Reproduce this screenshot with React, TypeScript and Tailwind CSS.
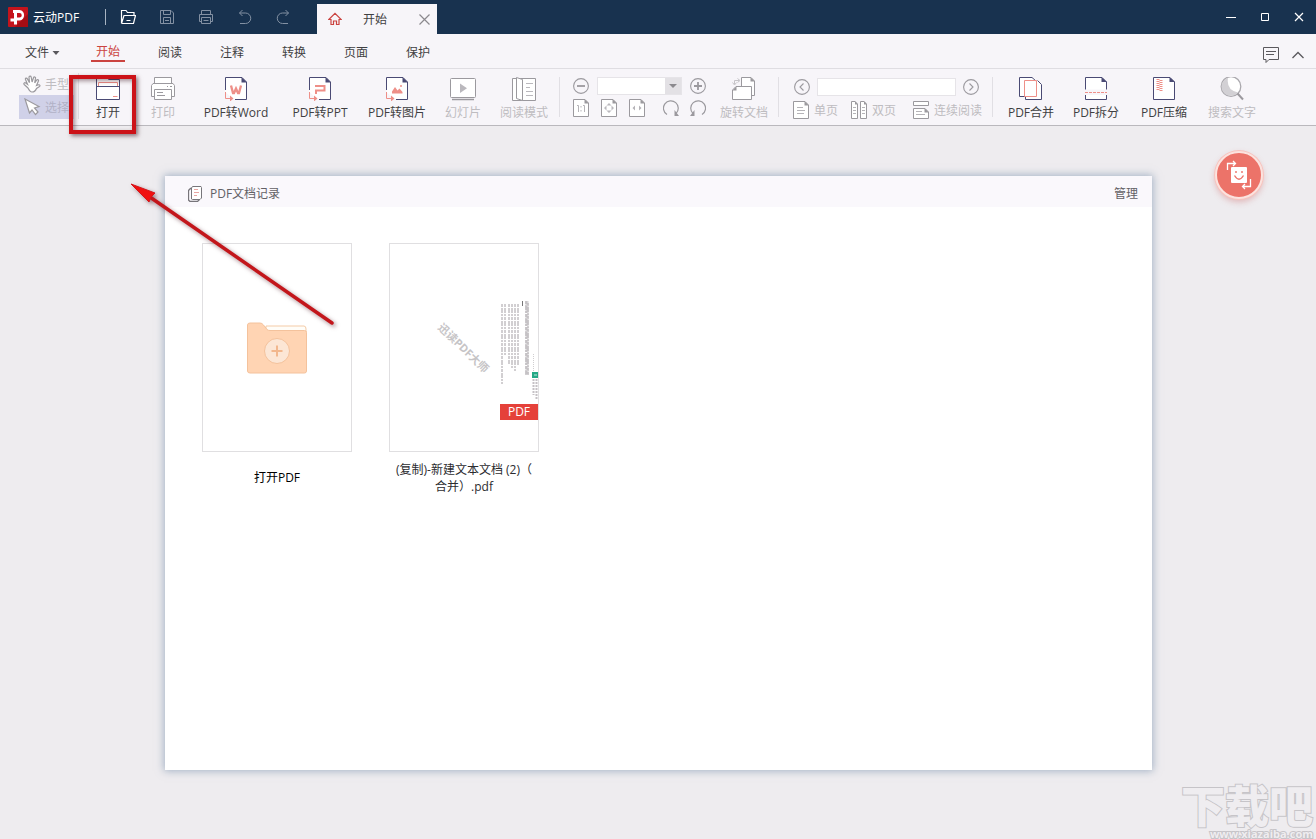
import React from "react";

type IconProps = { children: React.ReactNode; size?: string; box?: string; className?: string };

function Svg({ children, size = "h-6 w-6", box = "0 0 24 24", className = "" }: IconProps) {
  return (
    <svg aria-hidden="true" viewBox={box} fill="none" stroke="currentColor" className={`shrink-0 ${size} ${className}`}>
      {children}
    </svg>
  );
}

const NAVY = "#4a4a74";
const CORAL = "#ee8f88";

/* ---------- toolbar icons ---------- */

function ConvertIcon({ children }: { children: React.ReactNode }) {
  return (
    <Svg>
      <path d="M1.5 14V.5H18L22.5 5V22.5H9.5L1.5 15Z" fill="#fff" stroke="none" />
      <path d="M1.5 13V.5H18L22.5 5V22.5H11" stroke={NAVY} />
      <path d="M17.5 0V5.5H23Z" fill={NAVY} stroke="none" />
      <path d="M1.5 15V21.5H8" stroke={CORAL} />
      <path d="M6 18.5L9.5 21.5L6 24.5Z" fill={CORAL} stroke="none" />
      {children}
    </Svg>
  );
}

const OpenIcon = () => (
  <Svg>
    <path d="M.5 22.5V.5H10L13 2.5H23.5V22.5Z" fill="#fff" stroke={NAVY} />
    <path d="M2.5 9V5.5H21.5V9" stroke={CORAL} />
    <path d="M.5 9.5H23.5" stroke={NAVY} />
    <path d="M17 19.5H21.5" stroke={CORAL} />
  </Svg>
);

const PrintIcon = () => (
  <Svg>
    <path d="M3.5 7V.5H20.5V7" fill="#fff" />
    <path d="M3.5 19.5H.5V8.500L2 6.5H22L23.5 8.500V19.5H20.5" fill="#fff" />
    <path d="M3.5 12.5H20.5V22.5H3.5Z" fill="#fff" />
    <path d="M6 15.5H12M6 18.5H14M16 9.5H17M19 9.5H21" />
  </Svg>
);

const WordIcon = () => (
  <ConvertIcon>
    <path d="M7 8.500L9 16H10L12 11.5L14 16H15L17 8.500" stroke={CORAL} strokeWidth="2.3" />
  </ConvertIcon>
);
const PptIcon = () => (
  <ConvertIcon>
    <path d="M8 17V13.5H16.5V9H7" stroke={CORAL} strokeWidth="2" />
  </ConvertIcon>
);
const PictureIcon = () => (
  <ConvertIcon>
    <path d="M7 16.5V14.5L10 10L12.5 13.5L14.5 11.5L17.5 15V16.5Z" fill={CORAL} stroke="none" />
    <circle cx="16" cy="9" r="1" fill={CORAL} stroke="none" />
  </ConvertIcon>
);

const SlideIcon = () => (
  <Svg size="h-6 w-[26px]" box="0 0 26 24">
    <rect x=".5" y="1.5" width="25" height="19" rx="1" fill="#fff" />
    <path d="M10 6.5V16L17 11.2Z" fill="#bab8bd" stroke="none" />
    <path d="M2 22.5H24" strokeWidth="1.5" />
  </Svg>
);

const ReadIcon = () => (
  <Svg>
    <path d="M.5 1.5H23.5V23.5H.5Z" fill="#fff" />
    <path d="M4.5 .5L10.5 2.5V23.5L4.5 21.5Z" fill="#fff" />
    <path d="M14 6.5H21M14 10.5H18M14 14.5H21M14 18.5H21" stroke="#bab8bd" />
  </Svg>
);

const RotateDocIcon = () => (
  <Svg>
    <path d="M9.5 10V.5H19L22.5 4V18.5H19" fill="#fff" />
    <path d="M18.5 0V4.5H23Z" fill="currentColor" stroke="none" />
    <path d="M.5 22.5V13L4 9.5H19.5V22.5Z" fill="#fff" />
    <path d="M.5 13.5L4.5 9V13.5Z" fill="currentColor" stroke="none" />
    <path d="M2.5 7V3.5H7M.5 5.5L2.5 8L4.5 5.5M5.5 1.5L8 3.5L5.5 5.5" stroke="#c6c4c8" />
  </Svg>
);

const MergeIcon = () => (
  <Svg>
    <path d="M.5 19.5V.5H13L22.5 7V22.5H6.5V19.5Z" fill="#fff" stroke="none" />
    <path d="M6 19.5H.5V.5H13L17 4" stroke={NAVY} />
    <path d="M6.5 20V22.5H22.5V7.5L18.5 3.5" stroke={NAVY} />
    <path d="M5.500 3.5H17.5V19.5H5.500Z" stroke={CORAL} />
  </Svg>
);

const SplitIcon = () => (
  <Svg>
    <path d="M1.5 12.5V.5H18L22.5 5V12.5M1.5 18V22.5H22.5V18" fill="#fff" stroke={NAVY} />
    <path d="M17.5 0V5H23Z" fill={NAVY} stroke="none" />
    <path d="M1 15.5H23" stroke={CORAL} strokeDasharray="3 1" />
  </Svg>
);

const CompressIcon = () => (
  <Svg>
    <path d="M1.5 .5H18L22.5 5V22.5H1.5Z" fill="#fff" stroke={NAVY} />
    <path d="M17.5 0V5H23Z" fill={NAVY} stroke="none" />
    <path d="M6 2V14" stroke={CORAL} strokeWidth="3" strokeDasharray="1 1" />
    <path d="M9 3V14" stroke={CORAL} strokeWidth="3" strokeDasharray="1 1" />
  </Svg>
);

const SearchIcon = () => (
  <Svg>
    <circle cx="11" cy="9.5" r="9.8" fill="#fff" stroke="#aaa8ad" strokeWidth="1.3" />
    <path d="M8 .7A9.3 9.3 0 1 0 18 15.5Q6 13 8 .7Z" fill="#d2d0d4" stroke="none" />
    <path d="M17.500 16.500L23 22.5" strokeWidth="2" />
  </Svg>
);

/* ---------- small icons ---------- */

const Sm = ({ children }: { children: React.ReactNode }) => (
  <Svg size="h-[18px] w-4" box="0 0 16 18">
    {children}
  </Svg>
);

const SmallPage = ({ children }: { children: React.ReactNode }) => (
  <Sm>
    <path d="M.5 .5H12L15.5 4V17.5H.5Z" fill="#fff" />
    <path d="M11.5 0V4.5H16Z" fill="currentColor" stroke="none" />
    {children}
  </Sm>
);

const Round = ({ d, bold = false }: { d: string; bold?: boolean }) => (
  <Svg size="h-4 w-4" box="0 0 16 16">
    <circle cx="8" cy="8" r="7.4" strokeWidth="1.1" />
    <path d={d} strokeWidth={bold ? 1.8 : 1.1} />
  </Svg>
);

const HandIcon = () => (
  <Svg size="h-[18px] w-[18px]" box="0 0 18 18">
    <path
      d="M5 13L1.2 9.5C.3 8.600 1.5 7.2 2.7 8L4.5 9.3L2.5 4.5C2 3.1 3.8 2.6 4.4 3.9L6.5 7.6L6 2.3C6 .8 7.9.7 8.2 2.1L9.1 7L10.5 2.7C11 1.4 12.8 1.9 12.5 3.2L11.7 7.8L13.6 5.2C14.5 4 16 5 15.3 6.2L13.5 10.5L15.5 9.8C17 9.5 17.5 11 16.2 11.8L13.5 13.5C12.5 16 11 17 9 17C7 17 6 15 5 13Z"
      fill="#fff"
      strokeWidth="1.2"
    />
  </Svg>
);

const CursorIcon = () => (
  <Svg size="h-[18px] w-[18px]" box="0 0 18 18">
    <path d="M2 1L16 8.500L11.5 10L15 14L12.5 16.5L9 12L6.5 15Z" fill="#fff" strokeWidth="1.2" />
  </Svg>
);

/* ---------- building blocks ---------- */

function Tool({ icon, label, width, disabled = false }: { icon: React.ReactNode; label: string; width: string; disabled?: boolean }) {
  return (
    <button
      type="button"
      disabled={disabled}
      className={`flex shrink-0 flex-col items-center gap-1 whitespace-nowrap leading-4 ${width} ${disabled ? "text-[#9b999e]" : "text-[#3f3f42]"}`}
    >
      {icon}
      <span className={disabled ? "text-[#bebcc0]" : ""}>{label}</span>
    </button>
  );
}

function IconButton({ label, children }: { label: string; children: React.ReactNode }) {
  return (
    <button type="button" aria-label={label} disabled className="flex shrink-0 text-[#9b999e]">
      {children}
    </button>
  );
}

function PageMode({ icon, label }: { icon: React.ReactNode; label: string }) {
  return (
    <button type="button" disabled className="flex items-center gap-[5px] whitespace-nowrap leading-4 text-[#9b999e]">
      {icon}
      <span className="pt-[2px] text-[#bebcc0]">{label}</span>
    </button>
  );
}

const Divider = () => <div className="h-10 w-px shrink-0 bg-[#e1dfe4]" />;

function TitleBar() {
  return (
    <header className="flex h-[34px] items-stretch bg-[#18324f] text-white">
      <div className="flex w-[105px] items-center gap-[5px] pl-2">
        <svg viewBox="0 0 20 20" aria-hidden="true" className="h-5 w-5">
          <rect width="20" height="20" rx="1" fill="#c4141c" />
          <path d="M20 7V20H7Z" fill="#a60d14" />
          <path
            fillRule="evenodd"
            d="M5 3H11.5A5.3 5.3 0 0 1 11.5 13.5H9V17.5H6V14.5H2.5V11.5H6V6H5ZM9 6V10.5H11.5A2.2 2.2 0 0 0 11.5 6Z"
            fill="#fff"
          />
        </svg>
        <span className="whitespace-nowrap pt-[2px] leading-4">云动PDF</span>
      </div>
      <div className="my-auto h-4 w-px bg-[#a8b4c2]" />
      <div className="flex w-[211px] items-center gap-[23px] pl-[14px] text-[#8391a3]">
        <button type="button" aria-label="打开" className="text-white">
          <Svg size="h-4 w-4" box="0 0 16 16">
            <path d="M1.5 14.5V1.5H6L7.5 3.5H14V6M1.5 14.5H13.5L15.5 6.5H4L1.5 14.5M6.5 11.5H10.5" strokeWidth="1.2" />
          </Svg>
        </button>
        <button type="button" aria-label="保存">
          <Svg size="h-4 w-4" box="0 0 16 16">
            <path d="M1.5 1.5H12L14.5 4V14.5H1.5ZM4.5 1.5V5.5H11.5V1.5M4.5 14.5V8.500H11.5V14.5M6 11.5H10" />
          </Svg>
        </button>
        <button type="button" aria-label="打印">
          <Svg size="h-4 w-4" box="0 0 16 16">
            <path d="M3.5 5V1.5H12.5V5M3.5 12.5H1.5V5.5H14.5V12.5H12.5M3.5 8.500H12.5V14.5H3.5ZM5.5 11.5H10.5" />
          </Svg>
        </button>
        <button type="button" aria-label="撤销">
          <Svg size="h-4 w-4" box="0 0 16 16">
            <path d="M5.5 1L2.5 4L5.5 7M2.5 4H8.500A5 5 0 0 1 8.500 14.5H3" />
          </Svg>
        </button>
        <button type="button" aria-label="重做">
          <Svg size="h-4 w-4" box="0 0 16 16">
            <path d="M9.5 1L12.5 4L9.5 7M12.5 4H6.5A5 5 0 0 0 6.5 14.5H12" />
          </Svg>
        </button>
      </div>
      <div className="mt-1 flex w-[120px] items-center bg-[#f7f5f9] pl-[11px] pr-[7px] text-[#3f3f42]">
        <Svg size="h-[14px] w-[14px]" box="0 0 14 14" className="text-[#cb4340]">
          <path d="M.8 7.5L7 1.3L13.2 7.5H11V12.5H8.500V9H5.5V12.5H3V7.5Z" strokeWidth="1.2" />
        </Svg>
        <a href="#start" className="ml-[21px] pt-[2px] leading-4">
          开始
        </a>
        <button type="button" aria-label="关闭标签" className="ml-auto text-[#8b898e]">
          <Svg size="h-[11px] w-[11px]" box="0 0 11 11">
            <path d="M.5 .5L10.5 10.5M10.5 .5L.5 10.5" strokeWidth="1.2" />
          </Svg>
        </button>
      </div>
      <div className="ml-auto flex items-center gap-6 pr-3">
        <button type="button" aria-label="最小化">
          <Svg size="h-[10px] w-[10px]" box="0 0 10 10">
            <path d="M0 5.5H10" />
          </Svg>
        </button>
        <button type="button" aria-label="最大化">
          <Svg size="h-[10px] w-[10px]" box="0 0 10 10">
            <path d="M1.5 1.5H8.500V8.500H1.5Z" />
          </Svg>
        </button>
        <button type="button" aria-label="关闭">
          <Svg size="h-[10px] w-[10px]" box="0 0 10 10">
            <path d="M1 1L9 9M9 1L1 9" strokeWidth="1.2" />
          </Svg>
        </button>
      </div>
    </header>
  );
}

const MENUS = ["开始", "阅读", "注释", "转换", "页面", "保护"];

function MenuBar() {
  return (
    <nav className="flex h-[35px] items-center border-b border-[#dfdde2] bg-[#f7f5f9] pl-[25px] pr-3 pt-1 text-[#3f3f42]">
      <button type="button" className="flex w-[52px] items-center gap-[3px] leading-4">
        文件
        <Svg size="h-1 w-2" box="0 0 8 4">
          <path d="M.5 0H7.5L4 4Z" fill="#5a585d" stroke="none" />
        </Svg>
      </button>
      {MENUS.map((name, i) => (
        <a key={name} href={`#menu-${i}`} className="flex w-[62px] justify-center leading-4">
          <span className={i === 0 ? "border-b-2 border-[#cb4340] px-[5px] text-[#cb4340]" : ""}>{name}</span>
        </a>
      ))}
      <div className="ml-auto flex items-center gap-[13px] pt-[3px] text-[#5a585d]">
        <button type="button" aria-label="反馈">
          <Svg size="h-4 w-4" box="0 0 16 16">
            <path d="M.5 .5H15.5V12.5H6L3 15.5V12.5H.5ZM3 4.5H13M3 7.5H11" />
          </Svg>
        </button>
        <button type="button" aria-label="收起工具栏">
          <Svg size="h-3 w-3" box="0 0 12 12">
            <path d="M.5 9L6 3.5L11.5 9" strokeWidth="1.3" />
          </Svg>
        </button>
      </div>
    </nav>
  );
}

function ToolBar() {
  return (
    <div className="flex h-[57px] items-start border-b border-[#bab8bd] bg-[#f7f5f9] pl-[19px] pt-2">
      <div className="-mt-1 flex w-[60px] shrink-0 flex-col border-r border-[#e1dfe4] text-[#9b999e]">
        <button type="button" disabled className="flex h-[22px] items-center gap-1 pl-1 leading-4">
          <HandIcon />
          <span className="pt-[2px] text-[#bebcc0]">手型</span>
        </button>
        <button type="button" disabled className="mr-1 flex h-6 items-center gap-1 bg-[#d0d1e8] pl-1 leading-4">
          <CursorIcon />
          <span className="pt-[2px] text-[#b2b2c6]">选择</span>
        </button>
      </div>
      <div className="relative shrink-0">
        <Tool icon={<OpenIcon />} label="打开" width="w-[58px]" />
        <div className="pointer-events-none absolute -left-[10px] -top-[2px] h-[59px] w-[67px] border-4 border-[#cc1218] shadow-[2px_2px_4px_rgba(60,20,30,0.55),inset_2px_2px_4px_rgba(60,20,30,0.45)]" />
      </div>
      <Tool icon={<PrintIcon />} label="打印" width="w-[52px]" disabled />
      <Tool icon={<WordIcon />} label="PDF转Word" width="w-[94px]" />
      <Tool icon={<PptIcon />} label="PDF转PPT" width="w-[74px]" />
      <Tool icon={<PictureIcon />} label="PDF转图片" width="w-[80px]" />
      <Tool icon={<SlideIcon />} label="幻灯片" width="w-[52px]" disabled />
      <Tool icon={<ReadIcon />} label="阅读模式" width="w-[70px]" disabled />
      <Divider />
      <div className="ml-[13px] flex w-[133px] shrink-0 flex-col gap-1">
        <div className="flex items-center gap-2">
          <IconButton label="缩小">
            <Round d="M4 8H12" bold />
          </IconButton>
          <div className="flex h-[18px] flex-1 border border-[#e6e4e8] bg-white">
            <input aria-label="缩放比例" disabled className="w-0 min-w-0 flex-1 px-1" />
            <button type="button" aria-label="选择缩放比例" disabled className="flex w-4 items-center justify-center bg-[#e3e1e5] text-[#8b898e]">
              <Svg size="h-1 w-2" box="0 0 8 4">
                <path d="M0 0H8L4 4Z" fill="currentColor" stroke="none" />
              </Svg>
            </button>
          </div>
          <IconButton label="放大">
            <Round d="M4 8H12M8 4V12" bold />
          </IconButton>
        </div>
        <div className="flex items-center justify-between">
          <div className="flex gap-3">
            <IconButton label="实际大小">
              <SmallPage>
                <path d="M4 6.5H5.5V13M10 6.5H11.5V13M8 7V8.500M8 11V12.5" stroke="#b5b3b8" />
              </SmallPage>
            </IconButton>
            <IconButton label="适合页面">
              <SmallPage>
                <path d="M8 4L10.5 6.5H5.5ZM8 14L10.5 11.5H5.5ZM3 9L5.5 6.5V11.5ZM13 9L10.5 6.5V11.5Z" fill="#bab8bd" stroke="none" />
              </SmallPage>
            </IconButton>
            <IconButton label="适合宽度">
              <SmallPage>
                <path d="M6 6.5L3.5 9L6 11.5ZM10 6.5L12.5 9L10 11.5Z" fill="#b5b3b8" stroke="none" />
              </SmallPage>
            </IconButton>
          </div>
          <div className="flex gap-[11px]">
            <IconButton label="顺时针旋转">
              <Sm>
                <path d="M4 15.5A7.4 7.4 0 1 1 13 14.5" strokeWidth="1.2" />
                <path d="M11.500 11V17H16Z" fill="currentColor" stroke="none" />
              </Sm>
            </IconButton>
            <IconButton label="逆时针旋转">
              <Sm>
                <path d="M12 15.5A7.4 7.4 0 1 0 3 14.5" strokeWidth="1.2" />
                <path d="M4.500 11V17H0Z" fill="currentColor" stroke="none" />
              </Sm>
            </IconButton>
          </div>
        </div>
      </div>
      <div className="w-1 shrink-0" />
      <Tool icon={<RotateDocIcon />} label="旋转文档" width="w-[68px]" disabled />
      <Divider />
      <div className="ml-[14px] mr-[10px] flex w-[189px] shrink-0 flex-col gap-[5px] pt-px">
        <div className="flex items-center gap-[7px] pl-px pr-[3px]">
          <IconButton label="上一页">
            <Round d="M9.5 4.5L6 8L9.5 11.5" />
          </IconButton>
          <input aria-label="页码" disabled className="h-[18px] w-0 min-w-0 flex-1 border border-[#e6e4e8] bg-white px-1" />
          <IconButton label="下一页">
            <Round d="M6.5 4.5L10 8L6.5 11.5" />
          </IconButton>
        </div>
        <div className="flex justify-between">
          <div className="flex gap-[13px]">
            <PageMode
              label="单页"
              icon={
                <SmallPage>
                  <path d="M4 6.5H10M4 9.5H12M4 12.5H11" stroke="#b5b3b8" />
                </SmallPage>
              }
            />
            <PageMode
              label="双页"
              icon={
                <Sm>
                  <path d="M.5 .5H4L6.5 3V17.5H.5ZM9.5 .5H13L15.5 3V17.5H9.5Z" fill="#fff" />
                  <path d="M4 0V3.5H7ZM13 0V3.5H16Z" fill="currentColor" stroke="none" />
                  <path d="M2 6.5H5M2 9.5H5M2 12.5H5M11 6.5H14M11 9.5H14M11 12.5H14" stroke="#b5b3b8" />
                </Sm>
              }
            />
          </div>
          <PageMode
            label="连续阅读"
            icon={
              <Sm>
                <path d="M.5 .5H15.5V4.5H.5ZM.5 7.5H12L15.5 11V17.5H.5Z" fill="#fff" />
                <path d="M11.5 7V11.5H16Z" fill="currentColor" stroke="none" />
                <path d="M3 10.5H9M3 13.5H12" stroke="#b5b3b8" />
              </Sm>
            }
          />
        </div>
      </div>
      <Divider />
      <div className="w-[5px] shrink-0" />
      <Tool icon={<MergeIcon />} label="PDF合并" width="w-[66px]" />
      <Tool icon={<SplitIcon />} label="PDF拆分" width="w-[64px]" />
      <Tool icon={<CompressIcon />} label="PDF压缩" width="w-[72px]" />
      <Tool icon={<SearchIcon />} label="搜索文字" width="w-[64px]" disabled />
    </div>
  );
}

/* Columns of the sideways page in the preview: x, first y, last y */
const COLUMNS = [
  [113, 61, 141],
  [116, 61, 112],
  [120, 61, 121],
  [123, 61, 126],
  [126, 61, 128],
  [129, 61, 122],
  [137, 58, 132],
  [139, 60, 132],
];

function Preview() {
  return (
    <div className="relative flex h-[209px] w-full items-center justify-center overflow-hidden border border-[#e0dfe1] bg-white">
      <svg aria-hidden="true" viewBox="0 0 150 209" fill="none" className="absolute -left-px -top-px h-[209px] w-[150px]">
        {COLUMNS.map(([x, a, b]) => (
          <path key={x} d={`M${x} ${a}V${b}`} stroke="#a49fa4" strokeDasharray="3 1 5 1 2 1" />
        ))}
        <path d="M138 58V131" stroke="#bdb9bd" strokeWidth="3" strokeDasharray="4 1 7 1" opacity=".6" />
        <path d="M133.5 58V63" stroke="#777" />
        <path d="M144.5 111V128" stroke="#d0ced0" strokeDasharray="1 1" />
        <path d="M144.5 136V152M147.5 136V157" stroke="#c5c1c5" strokeWidth="2" strokeDasharray="2 1" />
        <rect x="143" y="129" width="6" height="6" fill="#24a886" />
        <path d="M145 132H148" stroke="#bfe8dd" />
      </svg>
      <span className="rotate-[44deg] whitespace-nowrap text-[11px] font-bold leading-4 text-[#c6c4c6]">迅读PDF大师</span>
      <span className="absolute bottom-[31px] right-0 flex h-4 w-[38px] items-center justify-center bg-[#e5413a] text-white">PDF</span>
    </div>
  );
}

function Documents() {
  return (
    <section className="flex flex-1 flex-col bg-white shadow-[0_0_8px_1px_rgba(100,130,160,0.55)]">
      <div className="flex h-[31px] items-center bg-[#faf8fc] pl-[23px] pr-[14px] pt-1 text-[#626065]">
        <Svg size="h-4 w-[15px]" box="0 0 15 16" className="text-[#77757a]">
          <path d="M4 2.5H2.5L.5 4.5V14L2 15.5H9.5L11.5 13.5" strokeWidth="1.3" />
          <path d="M3.5 2V13L4.5 13.5H12L13.5 12V1.5L13 .5H4.5Z" fill="#fff" />
          <path d="M6 3.5H10M6 6.5H11M6 9.5H9" stroke="#e8a5a2" />
        </Svg>
        <h1 className="ml-[7px] leading-4">PDF文档记录</h1>
        <button type="button" className="ml-auto leading-4">
          管理
        </button>
      </div>
      <div className="flex flex-wrap gap-[37px] px-[37px] py-9 text-[#2c2c2f]">
        <button type="button" className="flex w-[150px] flex-col items-center">
          <span className="flex h-[209px] w-full items-center justify-center border border-[#e0dfe1]">
            <svg aria-hidden="true" viewBox="0 0 60 52" fill="none" className="h-[52px] w-[60px]">
              <path d="M19 4H57Q59 4 59 7V15H19Z" fill="#fffdf8" stroke="#f4cba7" />
              <path
                d="M3 1H13Q15 1 16.5 3L20 7.5Q21 8.500 23 8.500H57.5Q59.5 8.500 59.5 10.5V49Q59.5 51 57.5 51H3Q.5 51 .5 49V3Q.5 1 3 1Z"
                fill="#ffd4b3"
                stroke="#f4c29c"
              />
              <circle cx="30" cy="29" r="12.5" fill="#fce6d5" stroke="#f4c29c" />
              <path d="M24.5 29H35.5M30 23.5V34.5" stroke="#f2b78d" strokeWidth="2" />
            </svg>
          </span>
          <span className="mt-[17px] leading-[17px] text-black">打开PDF</span>
        </button>
        <button type="button" className="flex w-[150px] flex-col items-center">
          <Preview />
          <span className="mt-[9px] whitespace-nowrap leading-[17px]">
            (复制)-新建文本文档 (2)（
            <br />
            合并）.pdf
          </span>
        </button>
      </div>
    </section>
  );
}

function Arrow() {
  return (
    <svg
      aria-hidden="true"
      viewBox="0 0 216 152"
      className="pointer-events-none absolute left-[127px] top-[54px] h-[152px] w-[216px] drop-shadow-[2px_2px_2px_rgba(80,20,30,0.5)]"
    >
      <path d="M20 15L205 143" stroke="#c3161b" strokeWidth="3.5" strokeLinecap="round" />
      <path d="M4 4L28 13L24 17L22 22Z" fill="#f01010" stroke="#d3161b" strokeLinejoin="round" />
    </svg>
  );
}

export default function App() {
  return (
    <div className="flex min-h-screen flex-col bg-[#eeecef] font-['Open_Sans','Noto_Sans_CJK_SC',sans-serif] text-[12px]">
      <TitleBar />
      <MenuBar />
      <ToolBar />
      <main className="relative flex flex-1 flex-col pb-[69px] pl-[165px] pr-[164px] pt-[50px]">
        <Documents />
        <Arrow />
        <button
          type="button"
          aria-label="转换助手"
          className="absolute right-[53px] top-[25px] flex h-12 w-12 items-center justify-center rounded-full border-2 border-[#fbe3df] bg-[#ec7369] text-white shadow-[0_0_0_1px_#f8c4be,0_3px_6px_rgba(200,80,80,0.35)]"
        >
          <Svg size="h-[30px] w-[30px]" box="0 0 30 30">
            <rect x="7" y="7" width="16" height="16" rx="1" fill="#fff" stroke="none" />
            <path d="M10.5 15.5Q15 23 19.5 15.5M12 11V13M18 11V13" stroke="#ec7369" strokeWidth="1.4" />
            <path d="M3.5 10V3.5H11M9 1L11.5 3.5L9 6M26.5 19V26.5H19M21 24L18.5 26.5L21 29" strokeWidth="1.3" />
          </Svg>
        </button>
        <div className="pointer-events-none absolute bottom-0 right-[3px] flex flex-col items-end font-bold text-[#efedf0] [-webkit-text-stroke:2px_#c6c4c8] [paint-order:stroke_fill]">
          <span className="text-[44px] font-black leading-[44px]">下载吧</span>
          <span className="text-[11px] leading-[11px]">www.xiazaiba.com</span>
        </div>
      </main>
    </div>
  );
}
